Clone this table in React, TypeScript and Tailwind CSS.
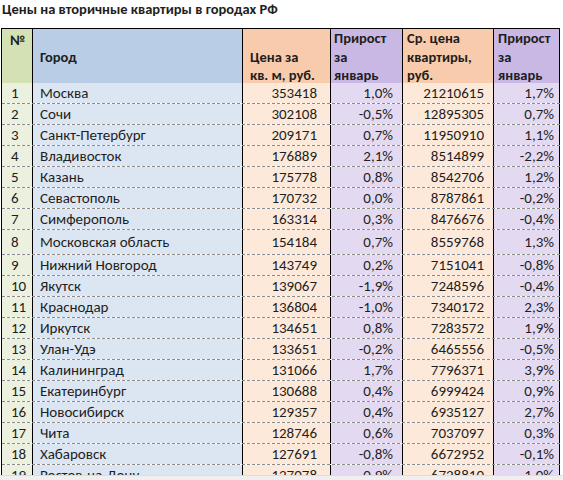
const ROWS: [string, string, string, string, string, string][] = [
  ['1', 'Москва', '353418', '1,0%', '21210615', '1,7%'],
  ['2', 'Сочи', '302108', '-0,5%', '12895305', '0,7%'],
  ['3', 'Санкт-Петербург', '209171', '0,7%', '11950910', '1,1%'],
  ['4', 'Владивосток', '176889', '2,1%', '8514899', '-2,2%'],
  ['5', 'Казань', '175778', '0,8%', '8542706', '1,2%'],
  ['6', 'Севастополь', '170732', '0,0%', '8787861', '-0,2%'],
  ['7', 'Симферополь', '163314', '0,3%', '8476676', '-0,4%'],
  ['8', 'Московская область', '154184', '0,7%', '8559768', '1,3%'],
  ['9', 'Нижний Новгород', '143749', '0,2%', '7151041', '-0,8%'],
  ['10', 'Якутск', '139067', '-1,9%', '7248596', '-0,4%'],
  ['11', 'Краснодар', '136804', '-1,0%', '7340172', '2,3%'],
  ['12', 'Иркутск', '134651', '0,8%', '7283572', '1,9%'],
  ['13', 'Улан-Удэ', '133651', '-0,2%', '6465556', '-0,5%'],
  ['14', 'Калининград', '131066', '1,7%', '7796371', '3,9%'],
  ['15', 'Екатеринбург', '130688', '0,4%', '6999424', '0,9%'],
  ['16', 'Новосибирск', '129357', '0,4%', '6935127', '2,7%'],
  ['17', 'Чита', '128746', '0,6%', '7037097', '0,3%'],
  ['18', 'Хабаровск', '127691', '-0,8%', '6672952', '-0,1%'],
  ['19', 'Ростов-на-Дону', '127078', '0,9%', '6728810', '1,0%'],
];

const grid = 'grid grid-cols-[31px_210px_88px_72px_91px_66px]';

export default function App() {
  return (
    <div className="w-[563px] h-[480px] bg-white overflow-hidden text-[#1e1e1e] font-['Carlito','Lato',sans-serif]">
      <div className="h-[28px] pl-[2px] pt-px text-[14.5px] leading-[16px] font-bold">
        Цены на вторичные квартиры в городах РФ
      </div>

      <div className="h-[447px] overflow-hidden">
        <div className="ml-px w-[559px] border-l border-t border-black text-[15px]">
          <div className={`${grid} h-[54px] border-b border-black font-bold leading-[18.5px] text-[14.5px]`}>
            <div className="bg-[#d3e1b5] border-r border-black pl-[8px] pt-[2px]">№</div>
            <div className="bg-[#b9cde6] border-r border-black pl-[7px] flex items-center">Город</div>
            <div className="bg-[#f8cbad] border-r border-black pl-[7px] flex flex-col justify-end">
              <span>Цена за</span>
              <span>кв. м, руб.</span>
            </div>
            <div className="bg-[#c9b7e4] border-r border-black pl-[3px] flex flex-col justify-center">
              <span>Прирост</span>
              <span>за</span>
              <span>январь</span>
            </div>
            <div className="bg-[#f8cbad] border-r border-black pl-[4px] flex flex-col justify-center">
              <span>Ср. цена</span>
              <span>квартиры,</span>
              <span>руб.</span>
            </div>
            <div className="bg-[#c9b7e4] border-r border-black pl-[4px] flex flex-col justify-center">
              <span>Прирост</span>
              <span>за</span>
              <span>январь</span>
            </div>
          </div>

          {ROWS.map(([n, city, price, g1, avg, g2]) => (
            <div
              key={n}
              className={`${grid} ${n === '8' ? 'h-[25px]' : 'h-[21px]'} border-b border-dashed border-[#8c8c8c] leading-[18px]`}
            >
              <div className="bg-[#ebf1de] border-r border-solid border-black pl-[9px] flex items-center">{n}</div>
              <div className="bg-[#dce6f2] border-r border-solid border-black pl-[7px] flex items-center">{city}</div>
              <div className="bg-[#fde9d9] border-r border-solid border-black pr-[13px] flex items-center justify-end">{price}</div>
              <div className="bg-[#e3daf2] border-r border-solid border-black pr-[9px] flex items-center justify-end">{g1}</div>
              <div className="bg-[#fde9d9] border-r border-solid border-black pr-[9px] flex items-center justify-end">{avg}</div>
              <div className="bg-[#e3daf2] border-r border-solid border-black pr-[5px] flex items-center justify-end">{g2}</div>
            </div>
          ))}
        </div>
      </div>

      <div className="h-[5px] bg-[#efefef] border-t border-[#dddddd]" />
    </div>
  );
}
